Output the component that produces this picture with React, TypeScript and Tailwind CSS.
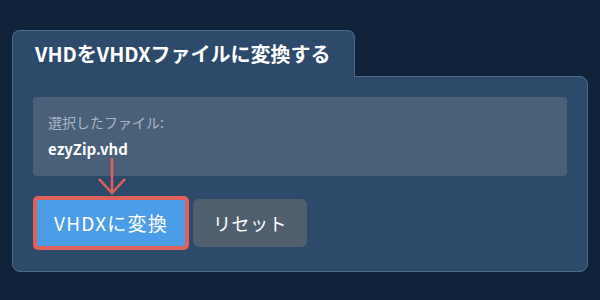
// VHD → VHDX converter panel with a tab header and a highlighted convert button
const FONT = { fontFamily: '"Noto Sans CJK JP", "Noto Sans", sans-serif' };

export default function App() {
  return (
    <div
      className="w-[600px] h-[300px] bg-[#10233a] pt-[30px] px-[12px] text-white"
      style={FONT}
    >
      {/* Tab header */}
      <div className="relative z-10 -mb-px w-[343px] h-[47px] bg-[#2d4a6a] border border-b-0 border-[#4d6a8a] rounded-t-lg pl-[22px] flex items-center">
        <h1 className="text-[20px] font-bold leading-none">VHDをVHDXファイルに変換する</h1>
      </div>

      {/* Card body */}
      <div className="relative h-[196px] bg-[#2d4a6a] border border-[#4d6a8a] rounded-lg rounded-tl-none px-[20px] pt-[20px]">
        {/* Selected file box */}
        <div className="h-[79px] bg-[#4a6079] rounded-[4px] pl-[15px] pt-[15px]">
          <p className="text-[14px] leading-[20px] text-[#a9b6c4]">選択したファイル:</p>
          <p className="mt-[6px] text-[15px] leading-[22px] font-bold">ezyZip.vhd</p>
        </div>

        {/* Buttons */}
        <div className="mt-[20px] flex items-center gap-[4px]">
          <button className="w-[156px] h-[54px] bg-[#4c9de8] border-4 border-[#e0605c] rounded-[5px] text-[19px] tracking-[1.2px]">
            VHDXに変換
          </button>
          <button className="w-[114px] h-[48px] bg-[#4f5f6e] rounded-[6px] text-[18px] tracking-[0.5px]">
            リセット
          </button>
        </div>

        {/* Annotation arrow pointing to the convert button */}
        <svg
          className="absolute left-[85px] top-[81px]"
          width="28"
          height="37"
          viewBox="0 0 28 37"
          fill="none"
          stroke="#e0605c"
          strokeWidth="2.5"
        >
          <line x1="14" y1="0" x2="14" y2="35" />
          <polyline points="1,21 14,35 27,21" />
        </svg>
      </div>
    </div>
  );
}
